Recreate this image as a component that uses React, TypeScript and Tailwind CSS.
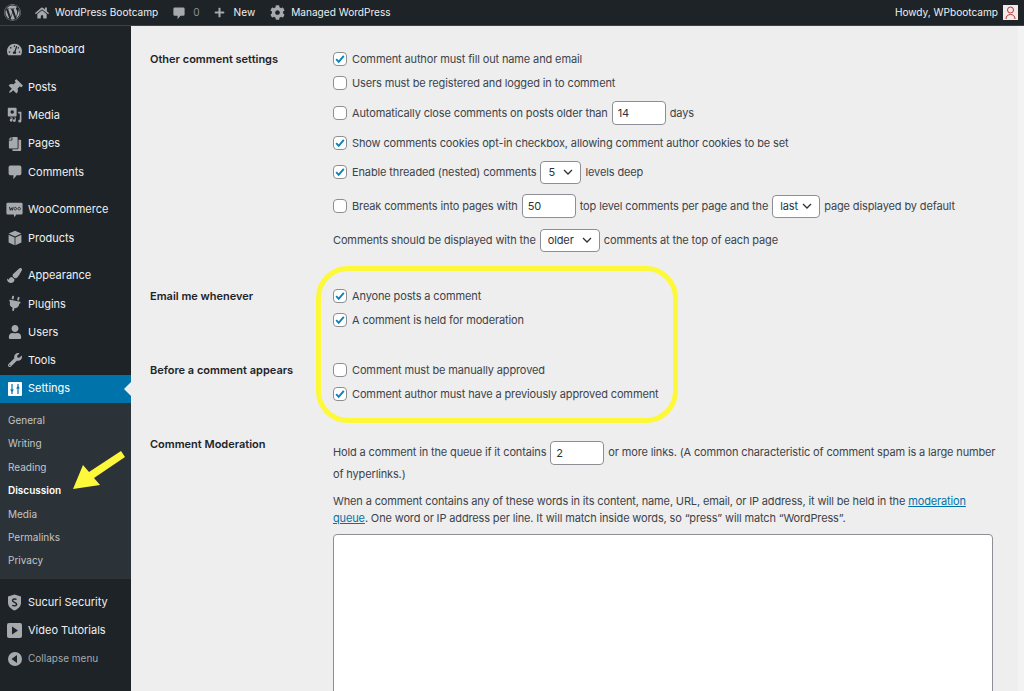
import type { ReactNode } from 'react';
import {
  FaWordpress,
  FaHome,
  FaPlus,
  FaCog,
  FaTachometerAlt,
  FaThumbtack,
  FaCopy,
  FaPaintBrush,
  FaPlug,
  FaUser,
  FaWrench,
} from 'react-icons/fa';

function CommentIcon({ size = 16 }: { size?: number }) {
  return (
    <svg width={size} height={size} viewBox="0 0 20 20" fill="currentColor">
      <path d="M4 2h12a2 2 0 0 1 2 2v8a2 2 0 0 1-2 2h-4l-4 5v-5H4a2 2 0 0 1-2-2V4a2 2 0 0 1 2-2z" />
    </svg>
  );
}

function MediaIcon() {
  return (
    <svg width="16" height="16" viewBox="0 0 20 20" fill="currentColor">
      <path d="M2 1h9a1 1 0 0 1 1 1v9a1 1 0 0 1-1 1H2a1 1 0 0 1-1-1V2a1 1 0 0 1 1-1zm4.500 3a2.200 2.200 0 1 0 0 4.400 2.200 2.200 0 0 0 0-4.400z" fillRule="evenodd" />
      <path d="M14 6h4v11.500a2 2 0 1 1-2-2V8h-2zM4 13h3v3.500a1.800 1.800 0 1 1-1.800-1.800H6V14H4zM9 13h2v4a1.800 1.800 0 1 1-1.800-1.800H10V14H9z" />
    </svg>
  );
}

function BoxIcon() {
  return (
    <svg width="16" height="16" viewBox="0 0 20 20" fill="currentColor">
      <path d="M10 1l8 3.500-8 3.500-8-3.500zM2 6l7.500 3.300V19L2 15.500zM18 6l-7.500 3.300V19l7.500-3.500z" />
    </svg>
  );
}

function WooIcon() {
  return (
    <svg width="17" height="17" viewBox="0 0 20 20">
      <path d="M2 2h16a1.500 1.500 0 0 1 1.500 1.500v11a1.500 1.500 0 0 1-1.500 1.500h-6l-2 3-1-3H2a1.500 1.500 0 0 1-1.500-1.500v-11A1.500 1.500 0 0 1 2 2z" fill="currentColor" />
      <path d="M4 7l1 4 1.200-3 1.200 3 1-4M11 7.500a1.500 1.500 0 1 0 .01 0M15.500 7.500a1.500 1.500 0 1 0 .01 0" fill="none" stroke="#1d2327" strokeWidth="1" />
    </svg>
  );
}

function SettingsIcon() {
  return (
    <svg width="14" height="14" viewBox="0 0 14 14">
      <rect width="14" height="14" rx="1" fill="#fff" />
      <path d="M4 2v10M10 2v10" stroke="#0073aa" strokeWidth="1.200" />
      <path d="M2 7.500h4L4 10zM8 6.500h4L10 4z" fill="#0073aa" />
    </svg>
  );
}

function ShieldIcon() {
  return (
    <svg width="15" height="17" viewBox="0 0 15 17">
      <path d="M7.500 0.500L14 2.500v6c0 4-3 6.500-6.500 8C4 15 1 12.500 1 8.500v-6z" fill="currentColor" />
      <path d="M9.500 5.500C8.500 4.700 5.500 4.700 5.500 6.500S9.700 8.300 9.700 10.200 6.500 12.200 5.300 11.200" fill="none" stroke="#1d2327" strokeWidth="1.400" />
    </svg>
  );
}

function VideoIcon() {
  return (
    <svg width="15" height="15" viewBox="0 0 15 15">
      <rect width="15" height="15" rx="2" fill="currentColor" />
      <path d="M5 3.500l6 4-6 4z" fill="#1d2327" />
    </svg>
  );
}

function CollapseIcon() {
  return (
    <svg width="14" height="14" viewBox="0 0 14 14">
      <circle cx="7" cy="7" r="7" fill="currentColor" />
      <path d="M9 3v8L3.500 7z" fill="#1d2327" />
    </svg>
  );
}

function MenuItem({ icon, label, active }: { icon: ReactNode; label: string; active?: boolean }) {
  return (
    <div className={`relative flex h-[28.25px] items-center text-[11px] ${active ? 'bg-[#0073aa] text-white' : 'text-[#f0f0f1]'}`}>
      <span className={`flex w-[28px] shrink-0 justify-center pl-[1px] ${active ? 'text-white' : 'text-[#a7aaad]'}`}>{icon}</span>
      <span>{label}</span>
      {active && (
        <span className="absolute right-0 top-1/2 h-0 w-0 -translate-y-1/2 border-y-[7px] border-r-[7px] border-y-transparent border-r-[#eeeeee]" />
      )}
    </div>
  );
}

function Check({ on }: { on?: boolean }) {
  return (
    <span className="mr-[5px] flex h-[14px] w-[14px] shrink-0 items-center justify-center rounded-[4px] border border-[#8c8f94] bg-white">
      {on && (
        <svg width="10" height="10" viewBox="0 0 10 10">
          <path d="M1.200 5.200l2.500 2.700L8.800 1.800" fill="none" stroke="#0a82bd" strokeWidth="1.900" />
        </svg>
      )}
    </span>
  );
}

function Num({ value, w }: { value: string; w: string }) {
  return (
    <input
      readOnly
      value={value}
      className={`mx-[4px] h-[24px] rounded-[4px] border border-[#8c8f94] bg-white px-[5px] text-[11px] text-[#2c3338] outline-none ${w}`}
    />
  );
}

function Sel({ value, w }: { value: string; w: string }) {
  return (
    <span className={`mx-[4px] flex h-[23px] items-center justify-between rounded-[4px] border border-[#8c8f94] bg-white pl-[7px] pr-[6px] text-[11px] text-[#2c3338] ${w}`}>
      {value}
      <svg width="12" height="12" viewBox="0 0 12 12">
        <path d="M2 4l4 4 4-4" fill="none" stroke="#2c3338" strokeWidth="1.300" />
      </svg>
    </span>
  );
}

function Row({ h, children }: { h: string; children: ReactNode }) {
  return <div className={`flex items-center whitespace-nowrap ${h}`}>{children}</div>;
}

export default function App() {
  return (
    <div className="relative flex h-[691px] w-[1024px] flex-col overflow-hidden bg-[#eeeeee] font-['Inter',sans-serif] text-[11px] tracking-[-0.13px] text-[#3c434a]">
      {/* Admin bar */}
      <header className="flex h-[26px] shrink-0 items-center justify-between border-b border-[#3c4146] bg-[#1d2327] pl-[4px] pr-[6px] text-[10.1px] tracking-normal text-[#f0f0f1]">
        <div className="flex items-center">
          <FaWordpress size={17} className="text-[#a7aaad]" />
          <span className="ml-[14px] text-[#a7aaad]"><FaHome size={14} /></span>
          <span className="ml-[6px]">WordPress Bootcamp</span>
          <span className="ml-[14px] text-[#a7aaad]"><CommentIcon size={14} /></span>
          <span className="ml-[7px] text-[#8c8f94]">0</span>
          <span className="ml-[14px] text-[#a7aaad]"><FaPlus size={11} /></span>
          <span className="ml-[9px]">New</span>
          <span className="ml-[15px] text-[#a7aaad]"><FaCog size={15} /></span>
          <span className="ml-[6px]">Managed WordPress</span>
        </div>
        <div className="flex items-center gap-[5px]">
          <span>Howdy, WPbootcamp</span>
          <span className="flex h-[15px] w-[15px] items-center justify-center bg-[#f4e9e6]">
            <svg width="11" height="13" viewBox="0 0 11 13" fill="none" stroke="#b3353a" strokeWidth="1">
              <circle cx="5.500" cy="4" r="3" />
              <path d="M1 13c0-3 2-4.500 4.500-4.500S10 10 10 13" />
            </svg>
          </span>
        </div>
      </header>

      <div className="flex min-h-0 flex-1">
        {/* Side menu */}
        <aside className="flex w-[131px] shrink-0 flex-col bg-[#1d2327] pt-[9.3px] tracking-normal">
          <MenuItem icon={<FaTachometerAlt size={15} />} label="Dashboard" />
          <div className="h-[9.500px]" />
          <MenuItem icon={<FaThumbtack size={15} className="rotate-45" />} label="Posts" />
          <MenuItem icon={<MediaIcon />} label="Media" />
          <MenuItem icon={<FaCopy size={14} className="-scale-x-100" />} label="Pages" />
          <MenuItem icon={<CommentIcon />} label="Comments" />
          <div className="h-[9.500px]" />
          <MenuItem icon={<WooIcon />} label="WooCommerce" />
          <MenuItem icon={<BoxIcon />} label="Products" />
          <div className="h-[9.500px]" />
          <MenuItem icon={<FaPaintBrush size={15} />} label="Appearance" />
          <MenuItem icon={<FaPlug size={15} className="rotate-12" />} label="Plugins" />
          <MenuItem icon={<FaUser size={14} />} label="Users" />
          <MenuItem icon={<FaWrench size={14} />} label="Tools" />
          <MenuItem icon={<SettingsIcon />} label="Settings" active />
          <div className="flex flex-col bg-[#2c3338] py-[6px] pl-[8px] text-[10px] text-[#c3c4c7]">
            <div className="flex h-[23.400px] items-center">General</div>
            <div className="flex h-[23.400px] items-center">Writing</div>
            <div className="flex h-[23.400px] items-center">Reading</div>
            <div className="flex h-[23.400px] items-center font-semibold text-white">Discussion</div>
            <div className="flex h-[23.400px] items-center">Media</div>
            <div className="flex h-[23.400px] items-center">Permalinks</div>
            <div className="flex h-[23.400px] items-center">Privacy</div>
          </div>
          <div className="h-[9.500px]" />
          <MenuItem icon={<ShieldIcon />} label="Sucuri Security" />
          <MenuItem icon={<VideoIcon />} label="Video Tutorials" />
          <div className="flex h-[28.250px] items-center text-[10px] text-[#a7aaad]">
            <span className="flex w-[28px] shrink-0 justify-center pl-[1px]"><CollapseIcon /></span>
            Collapse menu
          </div>
        </aside>

        {/* Settings form */}
        <main className="min-w-0 flex-1 pl-[19px] pt-[21px]">
          <section className="grid grid-cols-[183px_1fr]">
            <div className="flex h-[24px] items-center font-semibold tracking-normal text-[#1d2327]">Other comment settings</div>
            <div>
              <Row h="h-[24px]"><Check on />Comment author must fill out name and email</Row>
              <Row h="h-[24px]"><Check />Users must be registered and logged in to comment</Row>
              <Row h="h-[36px]"><Check />Automatically close comments on posts older than<Num value="14" w="w-[54px]" />days</Row>
              <Row h="h-[24px]"><Check on />Show comments cookies opt-in checkbox, allowing comment author cookies to be set</Row>
              <Row h="h-[34px]"><Check on />Enable threaded (nested) comments<Sel value="5" w="w-[41px]" />levels deep</Row>
              <Row h="h-[34px]"><Check />Break comments into pages with<Num value="50" w="w-[54px]" />top level comments per page and the<Sel value="last" w="w-[48px]" />page displayed by default</Row>
              <Row h="h-[34px]">Comments should be displayed with the<Sel value="older" w="w-[60px]" />comments at the top of each page</Row>
            </div>
          </section>

          <section className="mt-[27px] grid grid-cols-[183px_1fr]">
            <div className="flex h-[24px] items-center font-semibold tracking-normal text-[#1d2327]">Email me whenever</div>
            <div>
              <Row h="h-[24px]"><Check on />Anyone posts a comment</Row>
              <Row h="h-[24px]"><Check on />A comment is held for moderation</Row>
            </div>
          </section>

          <section className="mt-[26px] grid grid-cols-[183px_1fr]">
            <div className="flex h-[24px] items-center font-semibold tracking-normal text-[#1d2327]">Before a comment appears</div>
            <div>
              <Row h="h-[24px]"><Check />Comment must be manually approved</Row>
              <Row h="h-[24px]"><Check on />Comment author must have a previously approved comment</Row>
            </div>
          </section>

          <section className="mt-[26px] grid grid-cols-[183px_1fr]">
            <div className="font-semibold leading-[24px] tracking-normal text-[#1d2327]">Comment Moderation</div>
            <div className="w-[664px] tracking-[-0.14px]">
              <div className="pt-[8px]">
                <Row h="h-[25px]">Hold a comment in the queue if it contains<Num value="2" w="w-[54px]" />or more links. (A common characteristic of comment spam is a large number</Row>
                <div className="flex h-[17px] items-end leading-[16px]">of hyperlinks.)</div>
              </div>
              <div className="mt-[11px] whitespace-nowrap leading-[16.500px]">
                <div>
                  When a comment contains any of these words in its content, name, URL, email, or IP address, it will be held in the{' '}
                  <a className="text-[#0073aa] underline">moderation</a>
                </div>
                <div>
                  <a className="text-[#0073aa] underline">queue</a>. One word or IP address per line. It will match inside words, so “press” will match “WordPress”.
                </div>
              </div>
              <textarea readOnly className="mt-[8px] block h-[200px] w-[660px] resize-none rounded-[4px] border border-[#8c8f94] bg-white outline-none" />
            </div>
          </section>
        </main>
        <div className="w-[6px] shrink-0 bg-[#f3f3f3]" />
      </div>

      {/* Yellow annotations on top of the screenshot */}
      <div className="absolute left-[316px] top-[266px] h-[157px] w-[362px] rounded-[32px] border-[5px] border-[#fdf83a]" />
      <svg className="absolute left-[65px] top-[445px]" width="65" height="50" viewBox="0 0 65 50">
        <path d="M8 44L18 20 24 27 56 6 60 12 29 33 35 40z" fill="#fdf83a" />
      </svg>
    </div>
  );
}
